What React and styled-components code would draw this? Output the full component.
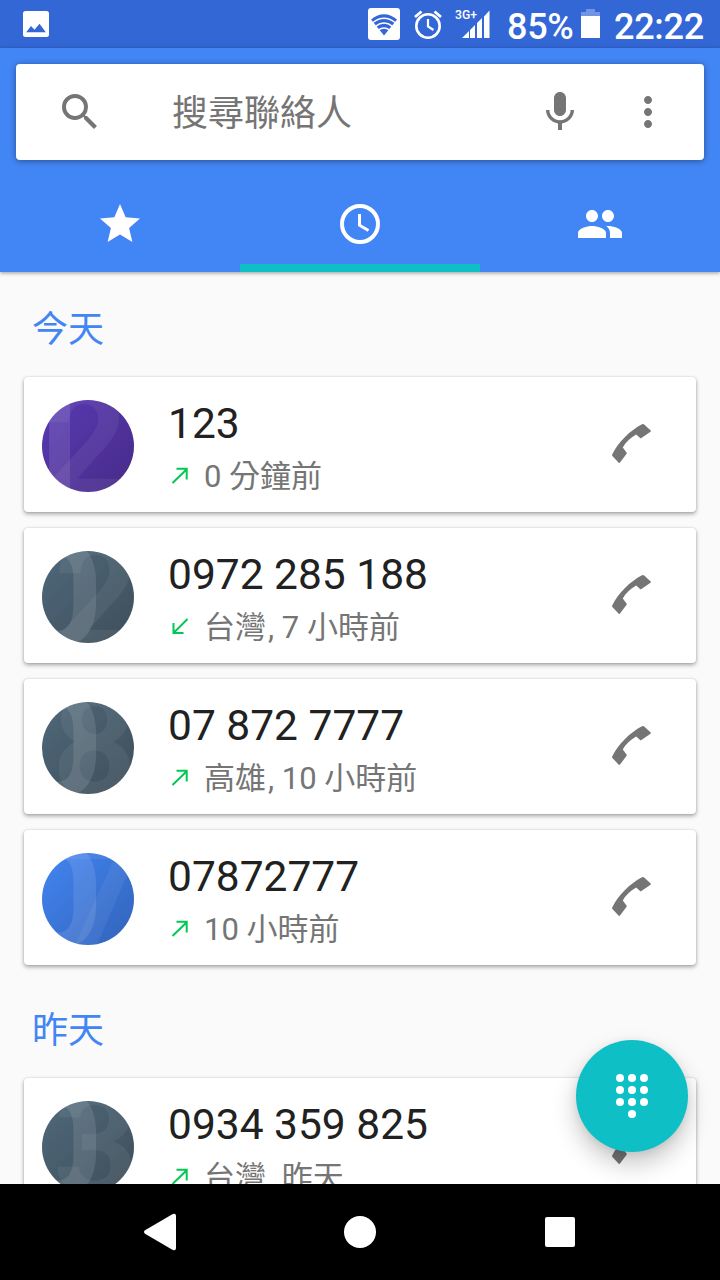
import React from 'react'

import styled, { createGlobalStyle } from 'styled-components'
import { MdSearch, MdMic, MdMoreVert, MdStar, MdPeople } from 'react-icons/md'

const GlobalStyle = createGlobalStyle`
    * {
        box-sizing: border-box;
    }

    body {
        margin: 0;
        font-family: Roboto, 'Noto Sans CJK TC', sans-serif;
        background: #fafafa;
    }

    svg {
        display: block;
        flex-shrink: 0;
    }
`

const Screen = styled.div`
    position: relative;
    display: flex;
    flex-direction: column;
    width: 720px;
    height: 1280px;
    overflow: hidden;
    background: #fafafa;
`

const StatusBar = styled.div`
    display: flex;
    align-items: center;
    justify-content: space-between;
    flex-shrink: 0;
    height: 48px;
    padding: 0 16px 0 23px;
    background: #3367d6;
    color: #fff;
`

const StatusGroup = styled.div`
    display: flex;
    align-items: center;
    height: 48px;
`

const StatusText = styled.span`
    padding-top: 7px;
    font-size: 36px;
    font-weight: 500;
    line-height: 43px;
    letter-spacing: -.3px;
    width: ${({ $width }) => $width}px;
    white-space: nowrap;
`

const Gap = styled.span`
    width: ${({ $size }) => $size}px;
`

const Header = styled.header`
    position: relative;
    z-index: 1;
    flex-shrink: 0;
    height: 224px;
    padding-top: 16px;
    background: #4285f4;
    box-shadow: 0 1px 4px rgba(0, 0, 0, .4);
`

const SearchBox = styled.div`
    display: flex;
    align-items: center;
    height: 96px;
    margin: 0 16px 16px;
    padding: 0 32px 0 40px;
    border-radius: 4px;
    background: #fff;
    color: #757575;
    box-shadow: 0 1px 6px rgba(0, 0, 0, .4);
`

const Placeholder = styled.span`
    flex: 1;
    margin-left: 68px;
    padding-top: 4px;
    font-size: 36px;
    line-height: 52px;
`

const SearchIcons = styled.div`
    display: flex;
    gap: 40px;
`

const Tabs = styled.nav`
    display: grid;
    grid-template-columns: repeat(3, 1fr);
    height: 96px;
`

const Tab = styled.div`
    display: flex;
    align-items: center;
    justify-content: center;
    padding-top: 8px;
    border-bottom: 8px solid ${({ $active }) => ($active ? '#0ebfc6' : 'transparent')};
    color: #fff;
`

const List = styled.main`
    flex: 1;
    min-height: 0;
    overflow: hidden;
    padding: 7px 24px 0;
`

const Group = styled.section`
    margin-bottom: 15px;
`

const GroupTitle = styled.h2`
    margin: 0;
    padding: 4px 0 0 8px;
    font-size: 36px;
    font-weight: 400;
    line-height: 94px;
    height: 98px;
    color: #4285f4;
`

const Cards = styled.div`
    display: flex;
    flex-direction: column;
    gap: 16px;
`

const Card = styled.article`
    display: flex;
    align-items: center;
    height: 135px;
    padding: 2px 44px 0 18px;
    border-radius: 4px;
    background: #fff;
    box-shadow: 0 2px 4px rgba(0, 0, 0, .34), 0 0 2px rgba(0, 0, 0, .14);
`

const Avatar = styled.svg`
    width: 92px;
    height: 92px;
    border-radius: 50%;
    background: linear-gradient(135deg, ${({ $from }) => $from} 15%, ${({ $to }) => $to} 85%);

    text {
        font-family: Roboto, sans-serif;
        font-size: 149px;
        font-weight: 700;
        fill: #fff;
        fill-opacity: .06;
    }

    text:first-child {
        fill-opacity: .11;
    }
`

const Info = styled.div`
    flex: 1;
    margin-left: 34px;
    padding-top: 7px;
`

const Phone = styled.div`
    padding-top: 1px;
    font-size: 42.5px;
    line-height: 50px;
    color: #212121;
    white-space: nowrap;
`

const Detail = styled.div`
    display: flex;
    align-items: center;
    gap: 15px;
    margin-top: 5px;
    padding-left: 3px;
    font-size: 31px;
    line-height: 46px;
    color: #757575;
    white-space: nowrap;

    svg {
        margin-bottom: 2px;
    }
`

const Place = styled.span`
    margin-right: 2px;
`

const CallButton = styled.div`
    padding-bottom: 4px;
`

const Fab = styled.button`
    position: absolute;
    z-index: 2;
    right: 32px;
    top: 1040px;
    display: flex;
    align-items: center;
    justify-content: center;
    width: 112px;
    height: 112px;
    padding: 0;
    border: none;
    border-radius: 50%;
    background: #0ebfc6;
    box-shadow: 0 12px 24px rgba(0, 0, 0, .22), 0 2px 8px rgba(0, 0, 0, .08);
`

const NavBar = styled.footer`
    position: relative;
    z-index: 3;
    display: flex;
    align-items: center;
    justify-content: space-between;
    flex-shrink: 0;
    height: 96px;
    padding: 0 145px 0 144px;
    background: #000;
`

const slate = ['#4c6475', '#41525f']
const purple = ['#5637ad', '#4a2d8e']
const blue = ['#4080ea', '#3468c2']

// digits: the glyph, its x inside the 92px avatar and the width it is stretched to
const groups = [
    {
        title: '今天',
        calls: [
            { phone: '123', time: '0 分鐘前', out: true, colors: purple, digits: [['1', -30.3], ['2', 0.8]] },
            { phone: '0972 285 188', place: '台灣', time: '7 小時前', out: false, colors: slate, digits: [['0', -30.5, 92], ['2', 12.3]] },
            { phone: '07 872 7777', place: '高雄', time: '10 小時前', out: true, colors: slate, digits: [['0', -30.5, 92], ['8', 9.8]] },
            { phone: '07872777', time: '10 小時前', out: true, colors: blue, digits: [['0', -30.5, 92], ['7', 15]] }
        ]
    },
    {
        title: '昨天',
        calls: [
            { phone: '0934 359 825', place: '台灣', time: '昨天', out: true, colors: slate, digits: [['0', -30.5, 92], ['3', 11.3]] }
        ]
    }
]

const ImageIcon = () => (
    <svg width="26" height="26" viewBox="0 0 26 26">
        <rect width="26" height="26" rx="2.5" fill="#fff" />
        <path d="M3.2 21.2L8 14.9l3.5 3.9 5-6 6.3 8.4z" fill="#3367d6" />
    </svg>
)

const WifiIcon = () => (
    <svg width="32" height="32" viewBox="0 0 32 32">
        <rect width="32" height="32" rx="3" fill="#fff" />
        <path d="M3 11.5Q16 1 29 11.5L16 27.5z" fill="#3367d6" />
        <g fill="none" stroke="#fff" strokeWidth="1.5">
            <path d="M5 14.5q11-8.5 22 0" />
            <path d="M7.5 18.3q8.5-6.5 17 0" />
            <path d="M10.5 22q5.5-4 11 0" />
        </g>
    </svg>
)

const AlarmIcon = () => (
    <svg width="28" height="30" viewBox="0 0 28 30" fill="none" stroke="#fff">
        <circle cx="14" cy="17" r="11.7" strokeWidth="2.6" />
        <path d="M14 10v7.5l5.5 3.5" strokeWidth="2.2" />
        <path d="M1 8l6.5-5.5M27 8l-6.5-5.5" strokeWidth="2.8" />
    </svg>
)

const SignalText = styled.text`
    font-family: Roboto, sans-serif;
    font-size: 13.5px;
    font-weight: 500;
    fill: #fff;
`

const SignalIcon = () => (
    <svg width="36" height="32" viewBox="0 0 36 32">
        <SignalText x="0" y="11" textLength="22" lengthAdjust="spacingAndGlyphs">3G+</SignalText>
        <path d="M7 30l7-7v7zM15 22l5-5v13h-5zM22 15l5-5v20h-5zM29 8.5l5.5-6V30H29z" fill="#fff" />
    </svg>
)

const BatteryIcon = () => (
    <svg width="19" height="30" viewBox="0 0 19 30" fill="#fff">
        <path d="M0 7V3h5V0h9v3h5v4z" opacity=".3" />
        <path d="M0 7h19v22H0z" />
    </svg>
)

const ClockIcon = () => (
    <svg width="40" height="40" viewBox="0 0 40 40" fill="none" stroke="#fff">
        <circle cx="20" cy="20" r="18" strokeWidth="4" />
        <path d="M19.5 10v11.2l9 5.3" strokeWidth="3" />
    </svg>
)

const ArrowIcon = ({ out }) => (
    <svg width="18" height="18" viewBox="0 0 18 18" fill="none" stroke="#00c853" strokeWidth="2">
        {out
            ? <path d="M1.5 16L15.5 2.500M5.5 1.7h10.2V12.500" />
            : <path d="M16.5 1L3 14.500M2.5 5v10h10" />}
    </svg>
)

const CallIcon = () => (
    <svg width="41" height="40" viewBox="0 0 41 40" fill="#757575">
        <path d="M33.2 .6L39.7 6.5Q40.3 7.2 39.5 7.7L30.4 14.1Q29.7 14.5 29.1 14L25.2 10.6Q16.5 15.5 11.8 23.4L15.5 28.4Q16 29 15.6 29.7L9 38.6Q8.3 39.4 7.7 38.7L1.4 32Q.9 31.4 1.2 30.5C7 18.5 19 6.5 31 .3Q32.3 -.2 33.2 .6z" />
    </svg>
)

const DialpadIcon = () => (
    <svg width="32" height="44" viewBox="0 0 32 44" fill="#fff">
        {[4, 16, 28].map(y => [4, 16, 28].map(x => <circle key={`${x}-${y}`} cx={x} cy={y} r="4" />))}
        <circle cx="16" cy="40" r="4" />
    </svg>
)

const Call = ({ call }) => {

    const { phone, place, time, out, colors, digits } = call

    return (
        <Card>
            <Avatar viewBox="0 0 92 92" $from={colors[0]} $to={colors[1]}>
                {digits.map(([digit, x, width]) => (
                    <text key={digit} x={x} y="95" textLength={width} lengthAdjust="spacingAndGlyphs">{digit}</text>
                ))}
            </Avatar>
            <Info>
                <Phone>{phone}</Phone>
                <Detail>
                    <ArrowIcon out={out} />
                    <span>{place && <><Place>{place}</Place>, </>}{time}</span>
                </Detail>
            </Info>
            <CallButton>
                <CallIcon />
            </CallButton>
        </Card>
    )
}

const App = () => {
    return (
        <Screen lang="zh-Hant">
            <GlobalStyle />
            <StatusBar>
                <StatusGroup>
                    <ImageIcon />
                </StatusGroup>
                <StatusGroup>
                    <WifiIcon />
                    <Gap $size={14} />
                    <AlarmIcon />
                    <Gap $size={13} />
                    <SignalIcon />
                    <Gap $size={16} />
                    <StatusText $width={74}>85%</StatusText>
                    <BatteryIcon />
                    <Gap $size={14} />
                    <StatusText $width={90}>22:22</StatusText>
                </StatusGroup>
            </StatusBar>
            <Header>
                <SearchBox>
                    <MdSearch size={48} />
                    <Placeholder>搜尋聯絡人</Placeholder>
                    <SearchIcons>
                        <MdMic size={48} />
                        <MdMoreVert size={48} />
                    </SearchIcons>
                </SearchBox>
                <Tabs>
                    <Tab><MdStar size={48} /></Tab>
                    <Tab $active><ClockIcon /></Tab>
                    <Tab><MdPeople size={48} /></Tab>
                </Tabs>
            </Header>
            <List>
                {groups.map(group => (
                    <Group key={group.title}>
                        <GroupTitle>{group.title}</GroupTitle>
                        <Cards>
                            {group.calls.map(call => <Call key={call.phone} call={call} />)}
                        </Cards>
                    </Group>
                ))}
            </List>
            <Fab aria-label="dialpad">
                <DialpadIcon />
            </Fab>
            <NavBar>
                <svg width="32" height="38" viewBox="1 0 32 38" fill="#fff">
                    <path d="M2 17.3L29.8 1Q33 0 33 3v32q0 3-3.2 2L2 20.7Q0 19 2 17.3z" />
                </svg>
                <svg width="32" height="32" viewBox="0 0 32 32" fill="#fff">
                    <circle cx="16" cy="16" r="16" />
                </svg>
                <svg width="31" height="30" viewBox="0 0 31 30" fill="#fff">
                    <rect x="1" width="30" height="30" rx="2" />
                </svg>
            </NavBar>
        </Screen>
    )
}

export default App
